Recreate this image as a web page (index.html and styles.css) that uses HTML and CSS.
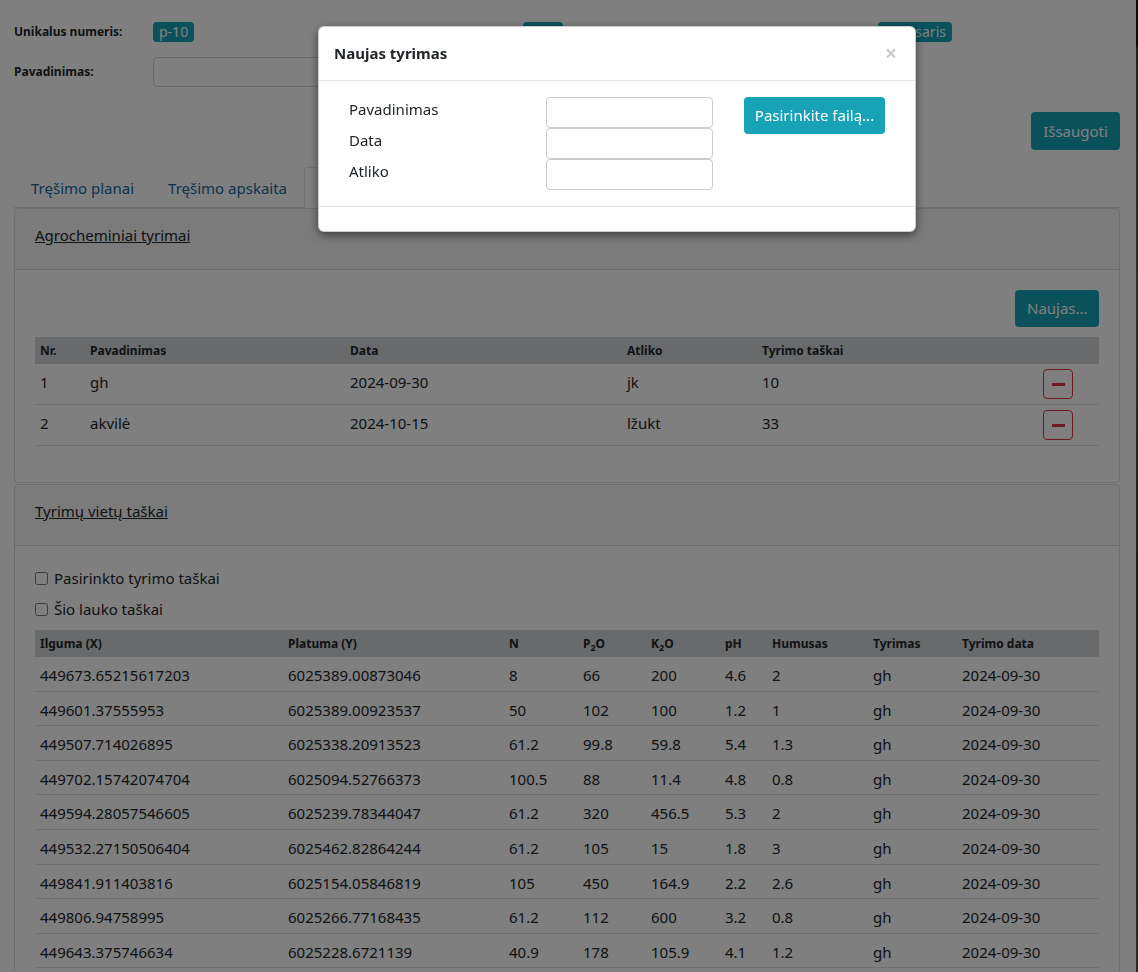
FILE: index.html
```html
<!DOCTYPE html>
<html>
<head>
  <meta charset="utf-8">
  <title>Laukas p-10</title>
  <link rel="stylesheet" href="styles.css">
</head>
<body>

  <div class="layout">
    <div class="main">

      <div class="info">
        <div class="info-row">
          <div class="info-item">
            <span class="info-label">Unikalus numeris:</span>
            <span class="badge">p-10</span>
          </div>
          <div class="info-item">
            <span class="info-label">Plotas, ha:</span>
            <span class="badge">10.5</span>
          </div>
          <div class="info-item">
            <span class="info-label">Sezonas:</span>
            <span class="badge">Pavasaris</span>
          </div>
        </div>
        <div class="info-row-name">
          <label class="info-label" for="field-name">Pavadinimas:</label>
          <input type="text" id="field-name" class="form-control name-input">
        </div>
      </div>

      <div class="actions">
        <button class="btn btn-info">Išsaugoti</button>
      </div>

      <ul class="nav-tabs">
        <li><a class="nav-link" href="#">Tręšimo planai</a></li>
        <li><a class="nav-link" href="#">Tręšimo apskaita</a></li>
        <li><a class="nav-link active" href="#">Tyrimai</a></li>
      </ul>

      <div class="card">
        <div class="card-header"><a href="#">Agrocheminiai tyrimai</a></div>
        <div class="card-body">
          <div class="card-tools">
            <button class="btn btn-info">Naujas...</button>
          </div>
          <table class="table tests">
            <thead>
              <tr>
                <th class="c-nr">Nr.</th>
                <th class="c-name">Pavadinimas</th>
                <th class="c-date">Data</th>
                <th class="c-by">Atliko</th>
                <th class="c-pts">Tyrimo taškai</th>
                <th class="c-del"></th>
              </tr>
            </thead>
            <tbody>
              <tr>
                <td>1</td>
                <td>gh</td>
                <td>2024-09-30</td>
                <td>jk</td>
                <td>10</td>
                <td class="c-del"><button class="btn-del"><span class="minus"></span></button></td>
              </tr>
              <tr>
                <td>2</td>
                <td>akvilė</td>
                <td>2024-10-15</td>
                <td>lžukt</td>
                <td>33</td>
                <td class="c-del"><button class="btn-del"><span class="minus"></span></button></td>
              </tr>
            </tbody>
          </table>
        </div>
      </div>

      <div class="card">
        <div class="card-header"><a href="#">Tyrimų vietų taškai</a></div>
        <div class="card-body">
          <div class="checks">
            <label class="check"><input type="checkbox"> Pasirinkto tyrimo taškai</label>
            <label class="check"><input type="checkbox"> Šio lauko taškai</label>
          </div>
          <table class="table points">
            <thead>
              <tr>
                <th class="p-x">Ilguma (X)</th>
                <th class="p-y">Platuma (Y)</th>
                <th class="p-n">N</th>
                <th class="p-p">P<sub>2</sub>O</th>
                <th class="p-k">K<sub>2</sub>O</th>
                <th class="p-ph">pH</th>
                <th class="p-hum">Humusas</th>
                <th class="p-test">Tyrimas</th>
                <th class="p-date">Tyrimo data</th>
              </tr>
            </thead>
            <tbody>
              <tr><td>449673.65215617203</td><td>6025389.00873046</td><td>8</td><td>66</td><td>200</td><td>4.6</td><td>2</td><td>gh</td><td>2024-09-30</td></tr>
              <tr><td>449601.37555953</td><td>6025389.00923537</td><td>50</td><td>102</td><td>100</td><td>1.2</td><td>1</td><td>gh</td><td>2024-09-30</td></tr>
              <tr><td>449507.714026895</td><td>6025338.20913523</td><td>61.2</td><td>99.8</td><td>59.8</td><td>5.4</td><td>1.3</td><td>gh</td><td>2024-09-30</td></tr>
              <tr><td>449702.15742074704</td><td>6025094.52766373</td><td>100.5</td><td>88</td><td>11.4</td><td>4.8</td><td>0.8</td><td>gh</td><td>2024-09-30</td></tr>
              <tr><td>449594.28057546605</td><td>6025239.78344047</td><td>61.2</td><td>320</td><td>456.5</td><td>5.3</td><td>2</td><td>gh</td><td>2024-09-30</td></tr>
              <tr><td>449532.27150506404</td><td>6025462.82864244</td><td>61.2</td><td>105</td><td>15</td><td>1.8</td><td>3</td><td>gh</td><td>2024-09-30</td></tr>
              <tr><td>449841.911403816</td><td>6025154.05846819</td><td>105</td><td>450</td><td>164.9</td><td>2.2</td><td>2.6</td><td>gh</td><td>2024-09-30</td></tr>
              <tr><td>449806.94758995</td><td>6025266.77168435</td><td>61.2</td><td>112</td><td>600</td><td>3.2</td><td>0.8</td><td>gh</td><td>2024-09-30</td></tr>
              <tr><td>449643.375746634</td><td>6025228.6721139</td><td>40.9</td><td>178</td><td>105.9</td><td>4.1</td><td>1.2</td><td>gh</td><td>2024-09-30</td></tr>
            </tbody>
          </table>
        </div>
      </div>

    </div>
    <div class="map-strip"></div>
  </div>

  <div class="backdrop"></div>

  <div class="modal">
    <div class="modal-header">
      <h4 class="modal-title">Naujas tyrimas</h4>
      <button class="close">&times;</button>
    </div>
    <div class="modal-body">
      <div class="test-form">
        <label class="form-label">Pavadinimas</label>
        <input type="text" class="modal-input">
        <button class="btn btn-info btn-file">Pasirinkite failą...</button>
        <label class="form-label">Data</label>
        <input type="text" class="modal-input">
        <label class="form-label">Atliko</label>
        <input type="text" class="modal-input">
      </div>
    </div>
    <div class="modal-footer"></div>
  </div>

</body>
</html>
```

FILE: styles.css
```css
body {
  margin: 0;
  padding: 0;
  font-family: "Noto Sans", "Open Sans", sans-serif;
  font-size: 15px;
  line-height: 24px;
  color: #212529;
  background-color: #fff;
  overflow: hidden;
}

.layout {
  display: flex;
  min-height: 100vh;
}

.main {
  flex: 1;
  padding: 20px 16px 0 14px;
}

.map-strip {
  width: 2px;
  background: linear-gradient(to bottom, #151515 0, #151515 46px, #3d4a3c 48px, #56624f 300px, #2f3a2e 600px, #4a5547 972px);
}

/* top info */

.info-row {
  display: grid;
  grid-template-columns: 370px 355px auto;
  height: 20px;
  align-items: center;
}

.info-item {
  display: flex;
  align-items: center;
}

.info-label {
  display: inline-block;
  width: 139px;
  font-size: 12px;
  font-weight: bold;
}

.badge {
  display: inline-block;
  padding: 0 6px;
  font-size: 14px;
  line-height: 20px;
  color: #fff;
  background-color: #17a2b8;
  border-radius: 4px;
}

.info-row-name {
  display: flex;
  align-items: center;
  margin-top: 17px;
}

.form-control {
  height: 30px;
  box-sizing: border-box;
  border: 1px solid #ced4da;
  border-radius: 4px;
  padding: 4px 8px;
  font: inherit;
}

.name-input {
  width: 560px;
}

.actions {
  display: flex;
  justify-content: flex-end;
  margin-top: 25px;
}

.btn {
  font: inherit;
  line-height: 24px;
  padding: 7px 12px;
  border: 0;
  border-radius: 4px;
  cursor: pointer;
}

.btn-info {
  color: #fff;
  background-color: #17a2b8;
}

.actions .btn {
  width: 89px;
}

/* tabs */

.nav-tabs {
  display: flex;
  list-style: none;
  margin: 17px 0 0 0;
  padding: 0;
  border-bottom: 1px solid #dee2e6;
}

.nav-link {
  display: block;
  margin-bottom: -1px;
  padding: 8px 16px 7px;
  border: 1px solid transparent;
  border-top-left-radius: 4px;
  border-top-right-radius: 4px;
  color: #17679a;
  text-decoration: none;
}

.nav-link.active {
  color: #495057;
  background-color: #fff;
  border-color: #dee2e6 #dee2e6 #fff;
}

/* cards */

.card {
  border: 1px solid rgba(0, 0, 0, 0.125);
  border-radius: 4px;
  margin-bottom: 1px;
}

.card-header {
  padding: 14px 20px 22px;
  background-color: rgba(0, 0, 0, 0.03);
  border-bottom: 1px solid rgba(0, 0, 0, 0.125);
}

.card-header a {
  color: #212529;
  text-decoration: underline;
}

.card-body {
  padding: 20px;
}

.card-tools {
  display: flex;
  justify-content: flex-end;
  margin-bottom: 10px;
}

.card-tools .btn {
  padding: 6px 12px 7px;
  width: 84px;
}

/* tables */

.table {
  width: 100%;
  border-collapse: collapse;
  table-layout: fixed;
  margin-bottom: 16px;
}

.table th {
  text-align: left;
  font-size: 12px;
  line-height: 19px;
  padding: 4px 5px;
  background-color: #d2d4d7;
}

.table td {
  padding: 5px;
  border-bottom: 1px solid #dee2e6;
  white-space: nowrap;
}

.table sub {
  font-size: 9px;
  line-height: 0;
}

.tests td {
  vertical-align: top;
  padding-top: 6px;
  padding-bottom: 4px;
}

.c-nr { width: 40px; }
.c-name { width: 250px; }
.c-date { width: 267px; }
.c-by { width: 125px; }
.c-pts { width: 190px; }

.tests td.c-del {
  padding: 5px 26px 5px 5px;
}

.btn-del {
  display: flex;
  align-items: center;
  justify-content: center;
  width: 30px;
  height: 30px;
  margin-left: auto;
  padding: 0;
  background: #fff;
  border: 1px solid #dc3545;
  border-radius: 4px;
}

.minus {
  width: 13px;
  height: 3px;
  background-color: #dc3545;
}

.checks {
  margin-bottom: 9px;
}

.check {
  display: flex;
  align-items: center;
  gap: 6px;
  margin-bottom: 7px;
}

.check:last-child {
  margin-bottom: 0;
}

.check input {
  width: 13px;
  height: 13px;
  margin: 0;
}

.points td {
  padding: 7px 5px 4px;
  line-height: 22.6px;
}

.p-x { width: 238px; }
.p-y { width: 211px; }
.p-n { width: 64px; }
.p-p { width: 58px; }
.p-k { width: 64px; }
.p-ph { width: 37px; }
.p-hum { width: 91px; }
.p-test { width: 79px; }

/* modal */

.backdrop {
  position: fixed;
  top: 0;
  left: 0;
  width: 100%;
  height: 100%;
  background-color: rgba(0, 0, 0, 0.5);
  z-index: 10;
}

.modal {
  position: fixed;
  top: 26px;
  left: 318px;
  width: 598px;
  box-sizing: border-box;
  background-color: #fff;
  border: 1px solid rgba(0, 0, 0, 0.2);
  border-radius: 6px;
  box-shadow: 0 3px 9px rgba(0, 0, 0, 0.5);
  z-index: 20;
}

.modal-header {
  display: flex;
  align-items: center;
  justify-content: space-between;
  padding: 14px 15px 15px;
  border-bottom: 1px solid #e5e5e5;
}

.modal-title {
  margin: 0;
  font-size: 15px;
  line-height: 24px;
  font-weight: bold;
}

.close {
  padding: 0;
  margin-right: 3px;
  border: 0;
  background: none;
  font: bold 21px/21px "Noto Sans", sans-serif;
  color: #000;
  opacity: 0.2;
}

.modal-body {
  padding: 16px 15px;
}

.test-form {
  display: grid;
  grid-template-columns: 197px 167px auto;
  grid-auto-rows: 31px;
  margin-left: 15px;
}

.form-label {
  line-height: 24px;
}

.modal-input {
  width: 167px;
  height: 31px;
  box-sizing: border-box;
  border: 1px solid #ccc;
  border-radius: 4px;
  font: inherit;
}

.btn-file {
  grid-column: 3;
  grid-row: 1 / span 2;
  justify-self: start;
  align-self: start;
  margin-left: 31px;
  width: 141px;
  padding: 6px 0;
  line-height: 25px;
  white-space: nowrap;
}

.modal-footer {
  height: 24px;
  border-top: 1px solid #e5e5e5;
}
```
